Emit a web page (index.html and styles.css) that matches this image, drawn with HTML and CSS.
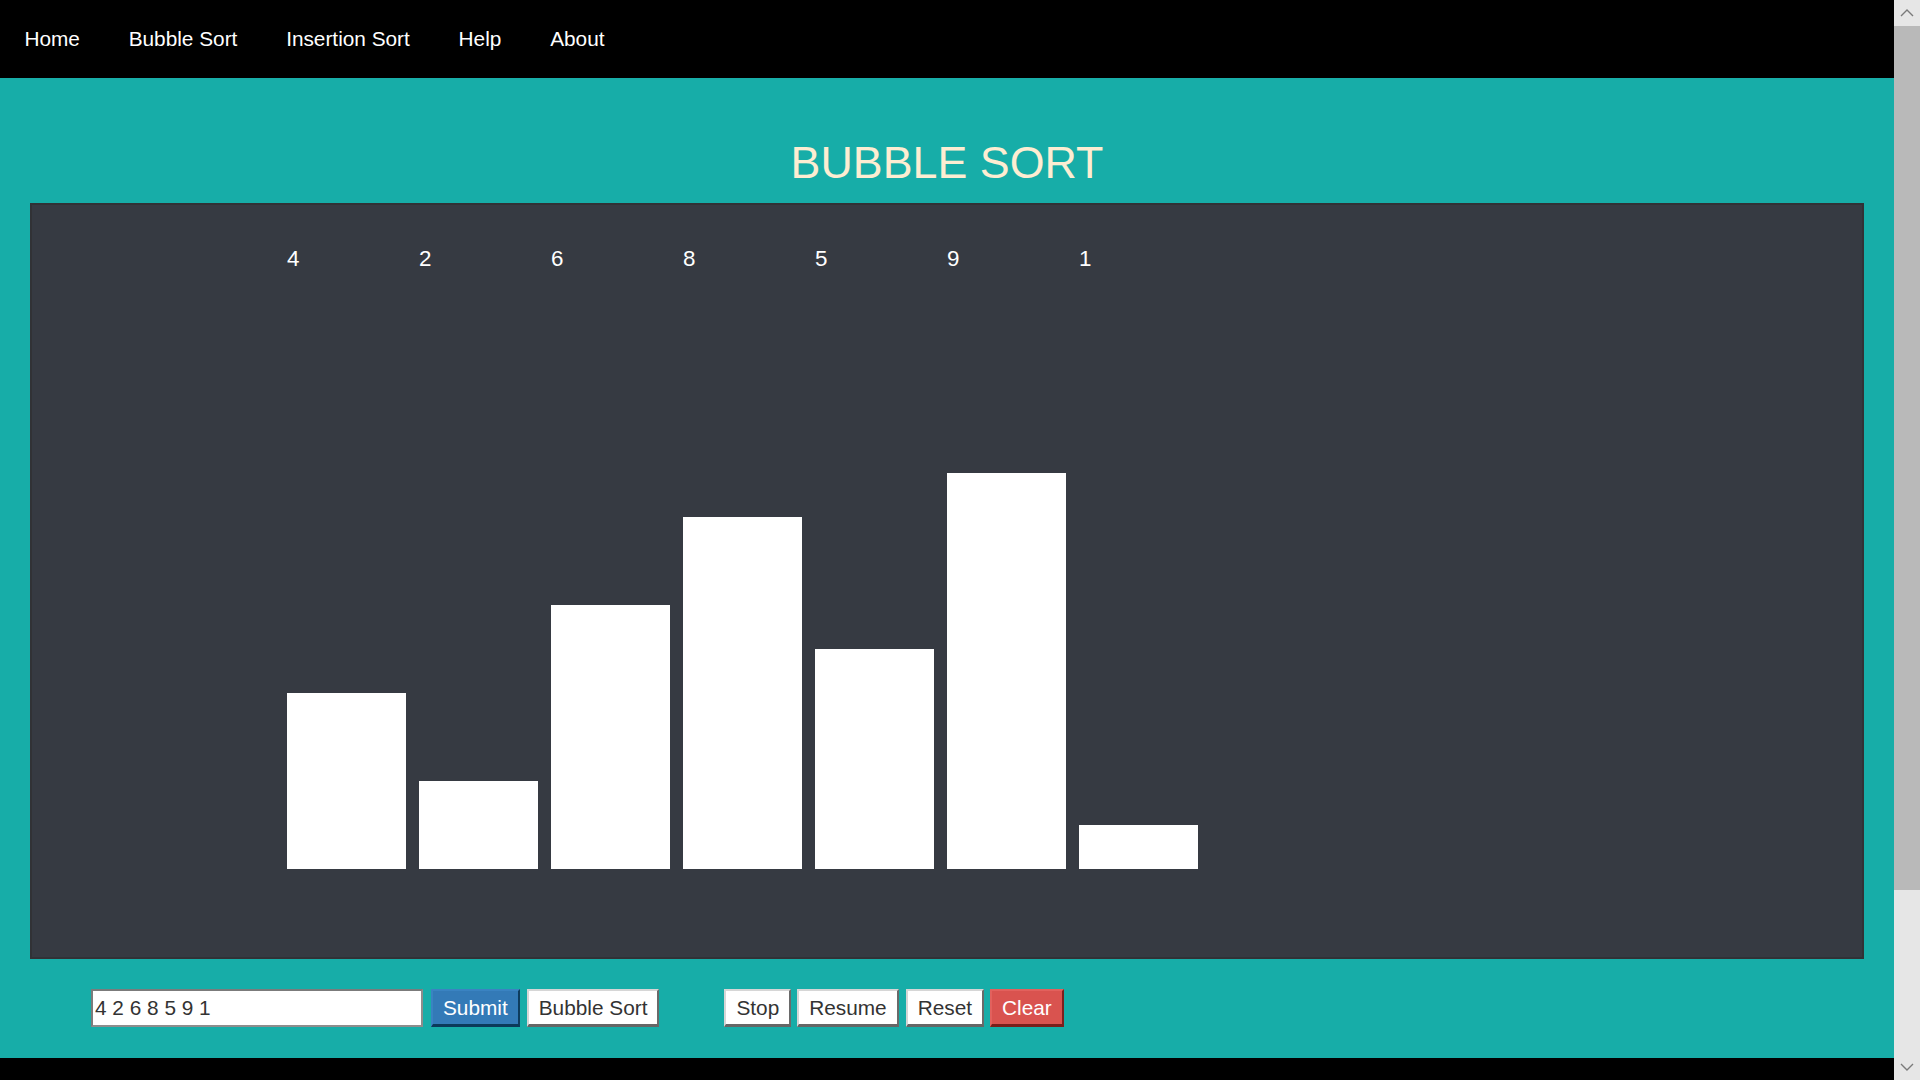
FILE: index.html
```html
<!DOCTYPE html>
<html lang="en">
<head>
<meta charset="utf-8">
<title>Bubble Sort</title>
<link rel="stylesheet" href="styles.css">
</head>
<body>
<div class="page">
  <nav class="topnav">
    <a class="nav-link" href="#">Home</a>
    <a class="nav-link" href="#">Bubble Sort</a>
    <a class="nav-link" href="#">Insertion Sort</a>
    <a class="nav-link" href="#">Help</a>
    <a class="nav-link" href="#">About</a>
  </nav>
  <main class="stage">
    <h1 class="title">BUBBLE SORT</h1>
    <section class="canvas">
      <div class="bars">
        <div class="col"><span class="num">4</span><div class="bar" style="height:176px"></div></div>
        <div class="col"><span class="num">2</span><div class="bar" style="height:88px"></div></div>
        <div class="col"><span class="num">6</span><div class="bar" style="height:264px"></div></div>
        <div class="col"><span class="num">8</span><div class="bar" style="height:352px"></div></div>
        <div class="col"><span class="num">5</span><div class="bar" style="height:220px"></div></div>
        <div class="col"><span class="num">9</span><div class="bar" style="height:396px"></div></div>
        <div class="col"><span class="num">1</span><div class="bar" style="height:44px"></div></div>
      </div>
    </section>
    <div class="controls">
      <input class="field" type="text" value="4 2 6 8 5 9 1">
      <button class="btn btn-primary ml-8">Submit</button>
      <button class="btn ml-7">Bubble Sort</button>
      <button class="btn ml-65">Stop</button>
      <button class="btn ml-6">Resume</button>
      <button class="btn ml-7">Reset</button>
      <button class="btn btn-danger ml-6">Clear</button>
    </div>
  </main>
  <footer class="footer"></footer>
</div>
<div class="scrollbar" aria-hidden="true">
  <div class="sb-arrow">
    <svg width="14" height="8" viewBox="0 0 14 8"><path d="M1 7 L7 1 L13 7" fill="none" stroke="#7a7a7a" stroke-width="1.4"/></svg>
  </div>
  <div class="sb-thumb"></div>
  <div class="sb-track"></div>
  <div class="sb-arrow">
    <svg width="14" height="8" viewBox="0 0 14 8"><path d="M1 1 L7 7 L13 1" fill="none" stroke="#7a7a7a" stroke-width="1.4"/></svg>
  </div>
</div>
</body>
</html>
```
FILE: styles.css
```css
html, body {
  margin: 0;
  padding: 0;
}
body {
  background: #000;
  font-family: "Liberation Sans", Arial, sans-serif;
}
.page {
  margin-right: 26px;
}
.topnav {
  height: 78px;
  background: #000;
  display: flex;
  align-items: center;
}
.nav-link {
  color: #fff;
  text-decoration: none;
  font-size: 20.8px;
  padding: 0 24.4px;
  line-height: 24px;
}
.stage {
  background: #17ada8;
  padding: 58px 30px 31px 30px;
}
.title {
  margin: 0;
  text-align: center;
  font-weight: normal;
  font-size: 44.8px;
  line-height: 52px;
  color: #fdedd2;
}
.canvas {
  margin-top: 15px;
  height: 756px;
  box-sizing: border-box;
  background: #363a42;
  border: 2px solid #313236;
  padding: 41px 0 88px 255px;
}
.bars {
  display: flex;
  gap: 13px;
  height: 100%;
}
.col {
  width: 119px;
  display: flex;
  flex-direction: column;
}
.num {
  color: #fff;
  font-size: 22.4px;
  line-height: 26px;
}
.bar {
  margin-top: auto;
  background: #fff;
}
.controls {
  margin-top: 30px;
  padding-left: 61px;
  display: flex;
  align-items: center;
  height: 38px;
}
.field {
  box-sizing: border-box;
  width: 332px;
  height: 38px;
  margin: 0;
  padding: 0 2px;
  font-family: "Liberation Sans", Arial, sans-serif;
  font-size: 20.8px;
  color: #333;
  background: #fff;
  border: 2px solid #8d8d8d;
  border-top-color: #7b7b7b;
  border-left-color: #7b7b7b;
  outline: none;
}
.btn {
  box-sizing: border-box;
  height: 38px;
  margin: 0;
  padding: 0 10px;
  font-family: "Liberation Sans", Arial, sans-serif;
  font-size: 20.8px;
  line-height: 24px;
  color: #333;
  background: #fff;
  border-style: solid;
  border-width: 2px 2px 3px 2px;
  border-color: #d6d6d6 #6a6a6a #666 #d6d6d6;
  cursor: pointer;
}
.btn-primary {
  color: #fff;
  background: #337ab7;
  border-color: #3a83c2 #0d3c5e #0b3a5a #3a83c2;
}
.btn-danger {
  color: #fff;
  background: #d9534f;
  border-color: #e2615d #7c201d #7a1e1b #e2615d;
}
.ml-6 { margin-left: 6px; }
.ml-7 { margin-left: 7px; }
.ml-8 { margin-left: 8px; }
.ml-65 { margin-left: 65px; }
.footer {
  height: 243px;
  background: #000;
}
.scrollbar {
  position: fixed;
  top: 0;
  right: 0;
  width: 26px;
  height: 100vh;
  background: #e6e6e6;
  display: flex;
  flex-direction: column;
}
.sb-arrow {
  height: 26px;
  display: flex;
  align-items: center;
  justify-content: center;
  background: #e6e6e6;
}
.sb-thumb {
  height: 864px;
  background: #b9b9b9;
}
.sb-track {
  flex: 1;
  background: #e6e6e6;
}
```
